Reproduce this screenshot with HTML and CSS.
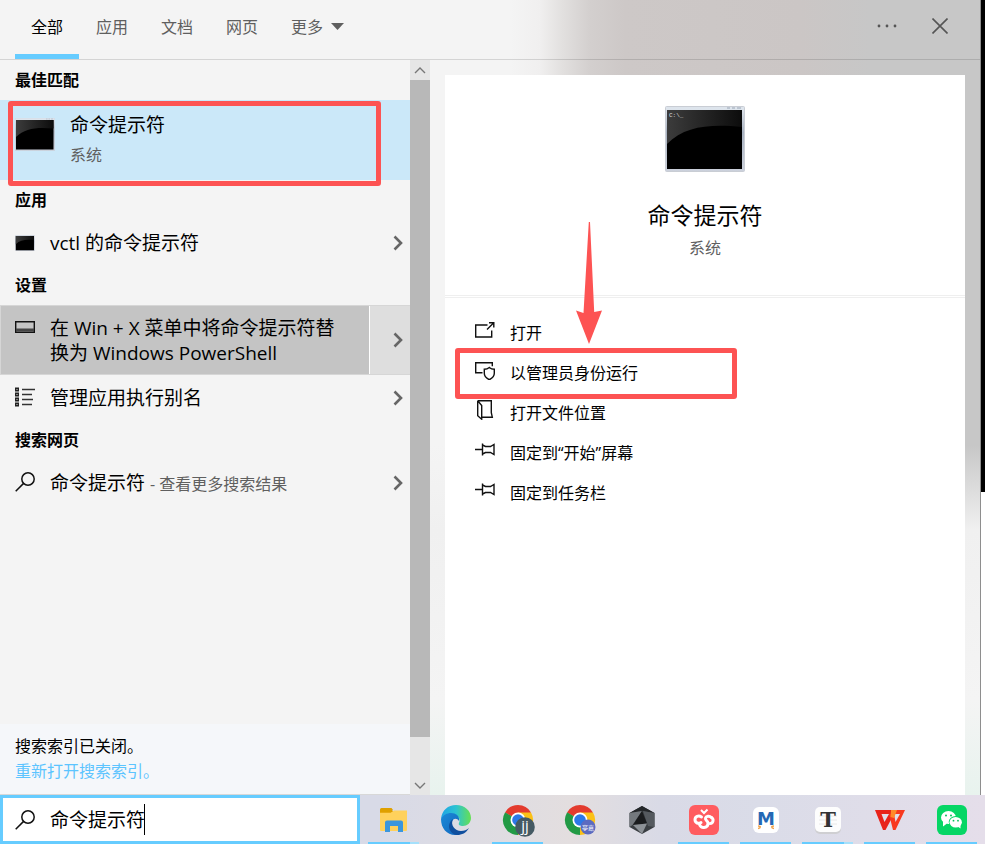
FILE: index.html
```html
<!DOCTYPE html>
<html lang="zh-CN">
<head>
  <meta charset="UTF-8" />
  <meta name="viewport" content="width=device-width, initial-scale=1.0"/>
  <title>搜索 | 命令提示符</title>
  <link rel="stylesheet" href="styles.css">
</head>
<body>
  <!-- shared icons -->
  <svg class="defs" width="0" height="0" aria-hidden="true">
    <defs>
      <linearGradient id="frame" x1="0" y1="0" x2="0" y2="1">
        <stop offset="0" stop-color="#e3e8ef"/>
        <stop offset="0.4" stop-color="#a9b3c2"/>
        <stop offset="1" stop-color="#ccd1dc"/>
      </linearGradient>
      <linearGradient id="gloss" x1="0" y1="0" x2="1" y2="0">
        <stop offset="0" stop-color="#3c3c3c"/>
        <stop offset="1" stop-color="#0c0c0c"/>
      </linearGradient>
    </defs>
    <symbol id="cmd" viewBox="0 0 80 66">
      <rect x="0.5" y="0.5" width="79" height="65" rx="1" fill="url(#frame)" stroke="#c9cdd4"/>
      <rect x="1" y="1" width="78" height="3" fill="#dde4ec"/>
      <path d="M62 2h3M67 2h3M72 2h4" stroke="#9aa5b5"/>
      <rect x="2" y="4" width="75" height="59" fill="#000"/>
      <path d="M2 4h75v17C45 18 20 20 2 38z" fill="url(#gloss)"/>
    </symbol>
    <symbol id="chevron" viewBox="0 0 10 16">
      <path d="M1.500 1.500 8 8l-6.500 6.500" fill="none" stroke="#666" stroke-width="2.600"/>
    </symbol>
    <symbol id="search" viewBox="0 0 20 20">
      <circle cx="13" cy="7" r="6.200" fill="none" stroke="#111" stroke-width="1.500"/>
      <path d="M8.600 11.400.7 19.300" stroke="#111" stroke-width="1.500"/>
    </symbol>
    <symbol id="pin" viewBox="0 0 20 20">
      <path d="M0 9.500h7.500M7.500 3.500v12M7.500 5l3 1.500h5L19 4.500v10l-3.500-2h-5l-3 1.500" fill="none" stroke="#111" stroke-width="1.400"/>
    </symbol>
  </svg>

  <main class="search-window">
    <header>
      <nav>
        <ul>
          <li><a href="#" class="active">全部</a></li>
          <li><a href="#">应用</a></li>
          <li><a href="#">文档</a></li>
          <li><a href="#">网页</a></li>
          <li><a href="#">更多 <svg width="13" height="7" viewBox="0 0 13 7"><path d="M0 0h13L6.500 7z" fill="#5f5f5f"/></svg></a></li>
        </ul>
      </nav>
      <div class="window-buttons">
        <button aria-label="选项">
          <svg width="20" height="20" viewBox="0 0 20 20" fill="#555"><circle cx="2" cy="10" r="1.400"/><circle cx="10" cy="10" r="1.400"/><circle cx="18" cy="10" r="1.400"/></svg>
        </button>
        <button aria-label="关闭">
          <svg width="16" height="16" viewBox="0 0 16 16"><path d="M.5.5l15 15M15.500.5l-15 15" stroke="#555" stroke-width="1.600"/></svg>
        </button>
      </div>
    </header>

    <div class="content">
      <section class="results">
        <div class="result-list">
          <h2>最佳匹配</h2>
          <button class="best-match">
            <svg width="40" height="33"><use href="#cmd"/></svg>
            <span class="best-text">
              <span class="name">命令提示符</span>
              <span class="kind">系统</span>
            </span>
          </button>

          <h2>应用</h2>
          <div class="row">
            <button class="result">
              <svg width="20" height="16"><use href="#cmd"/></svg>
              <span>vctl 的命令提示符</span>
            </button>
            <button class="expand" aria-label="展开"><svg width="10" height="16"><use href="#chevron"/></svg></button>
          </div>

          <h2>设置</h2>
          <div class="row hovered">
            <button class="result">
              <svg width="20" height="20" viewBox="0 0 20 20"><path d="M.7 4.700h18.600v10.600H.7z" fill="none" stroke="#111" stroke-width="1.400"/><path d="M1 13h18" stroke="#444" stroke-width="3"/></svg>
              <span>在 Win + X 菜单中将命令提示符替换为 Windows PowerShell</span>
            </button>
            <button class="expand" aria-label="展开"><svg width="10" height="16"><use href="#chevron"/></svg></button>
          </div>
          <div class="row">
            <button class="result">
              <svg width="20" height="20" viewBox="0 0 20 20"><path d="M0 .5h4v4H0zM0 5.500h4v4H0zM0 10.500h4v4H0zM0 15.500h4v4H0z" fill="#222"/><path d="M1.500 2.500h1M1.500 7.500h1M1.500 12.500h1M1.500 17.500h1" stroke="#ddd"/><path d="M7 2.500h13M7 7.500h10M7 12.500h11M7 17.500h10" stroke="#333" stroke-width="1.400"/></svg>
              <span>管理应用执行别名</span>
            </button>
            <button class="expand" aria-label="展开"><svg width="10" height="16"><use href="#chevron"/></svg></button>
          </div>

          <h2>搜索网页</h2>
          <div class="row">
            <button class="result">
              <svg width="20" height="20"><use href="#search"/></svg>
              <span>命令提示符 <small>- 查看更多搜索结果</small></span>
            </button>
            <button class="expand" aria-label="展开"><svg width="10" height="16"><use href="#chevron"/></svg></button>
          </div>
        </div>
        <div class="index-note">
          <p>搜索索引已关闭。</p>
          <a href="#">重新打开搜索索引。</a>
        </div>
      </section>

      <div class="scrollbar">
        <button aria-label="向上滚动"><svg width="12" height="7" viewBox="0 0 12 7"><path d="M1 6l5-5 5 5" fill="none" stroke="#777" stroke-width="1.400"/></svg></button>
        <div class="thumb"></div>
        <button aria-label="向下滚动"><svg width="12" height="7" viewBox="0 0 12 7"><path d="M1 1l5 5 5-5" fill="none" stroke="#777" stroke-width="1.400"/></svg></button>
      </div>

      <section class="details">
        <div class="app-card">
          <svg width="80" height="66" viewBox="0 0 80 66"><use href="#cmd"/><text x="4" y="11" class="prompt">C:\_</text></svg>
          <h1>命令提示符</h1>
          <p>系统</p>
        </div>
        <ul class="actions">
          <li><button>
            <svg width="20" height="20" viewBox="0 0 20 20" fill="none" stroke="#111" stroke-width="1.400"><path d="M12.500 5H.7v12h16v-6.500M12 9.500l6-6M14 2.700h4.800v4.800"/></svg>
            打开
          </button></li>
          <li><button class="marked">
            <svg width="20" height="20" viewBox="0 0 20 20" fill="none" stroke="#111" stroke-width="1.400"><path d="M7.500 12.700H.7v-10h16.600v3.500M14.300 7.500c1.500 1.300 3 1.800 5 1.800v4c0 3-2 5-5 6.400-3-1.400-5-3.400-5-6.400v-4c2 0 3.500-.5 5-1.800z"/></svg>
            以管理员身份运行
          </button></li>
          <li><button>
            <svg width="20" height="20" viewBox="0 0 20 20" fill="none" stroke="#111" stroke-width="1.400"><path d="M2.700.7h13.600v12l1 4.500H7M2.700.7v15l4 3.500V5.500L2.700.7"/></svg>
            打开文件位置
          </button></li>
          <li><button>
            <svg width="20" height="20"><use href="#pin"/></svg>
            固定到“开始”屏幕
          </button></li>
          <li><button>
            <svg width="20" height="20"><use href="#pin"/></svg>
            固定到任务栏
          </button></li>
        </ul>
        <svg class="arrow" width="26" height="122" viewBox="0 0 26 122"><path d="M12.800 0h1.200l4.200 90 7.800-1.500L13 122 0 88.500 7.500 91z" fill="#fd5353"/></svg>
      </section>
    </div>
  </main>

  <footer class="taskbar">
    <label class="search-box">
      <svg width="20" height="20"><use href="#search"/></svg>
      <input type="text" value="命令提示符" aria-label="搜索">
      <span class="caret"></span>
    </label>
    <div class="apps">
      <button class="open stacked" aria-label="文件资源管理器">
        <svg width="30" height="30" viewBox="0 0 30 30"><path d="M1 6h13v5H1z" fill="#e09a00"/><path d="M1 7.500h11l3-2h13V25a1 1 0 0 1-1 1H2a1 1 0 0 1-1-1z" fill="#ffd15c"/><path d="M1 4.500A1.500 1.500 0 0 1 2.500 3h10l1.500 2-2.500 2.500H1z" fill="#dfa000"/><path d="M6 27V17.500A2 2 0 0 1 8 15.500h14a2 2 0 0 1 2 2V27h-5v-6h-8v6z" fill="#3a96dd"/></svg>
      </button>
      <button aria-label="Edge">
        <svg width="30" height="30" viewBox="0 0 30 30">
          <defs>
            <linearGradient id="edgeA"><stop offset="0" stop-color="#1fa3e5"/><stop offset="0.500" stop-color="#2cc3d2"/><stop offset="1" stop-color="#66e052"/></linearGradient>
            <linearGradient id="edgeB" x1="0" y1="0" x2="1" y2="1"><stop offset="0" stop-color="#1a8ad8"/><stop offset="1" stop-color="#1467bd"/></linearGradient>
          </defs>
          <path d="M0 14C1 5 7 0 15 0c9 0 15 6 15 13 0 5-4 8-8 8-3 0-5-1-4-3 2-4-1-8-6-8-6 0-10 2-12 4z" fill="url(#edgeA)"/>
          <path d="M0 14C2 10 6 8 10 8c6 0 9 4 8 8-2-3-6-3-7 1-2 5 1 12 8 12.500C8 32 0 25 0 14z" fill="url(#edgeB)"/>
          <path d="M12 14c-3 6 2 12 8 12 3 0 6-1 8-3-3 5-7 7-12 7-8-1-11-11-4-16z" fill="#104f9e"/>
        </svg>
      </button>
      <button class="open" aria-label="Chrome 工作资料">
        <svg width="34" height="34" viewBox="0 0 34 34">
          <g id="chrome"><path d="M17 17 4 9.500a15 15 0 0 1 26 0z" fill="#e33b2e"/><path d="M17 17 4 9.500A15 15 0 0 0 17 32z" fill="#229a45"/><path d="M17 17h0V9.500h13A15 15 0 0 1 17 32z" fill="#fbc116"/><path d="M17 17 10.500 20.700 4 9.500z" fill="#229a45"/><circle cx="17" cy="17" r="7.500" fill="#fff"/><circle cx="17" cy="17" r="5.800" fill="#2c78e8"/></g>
          <circle cx="24" cy="24" r="9.800" fill="#455a64"/><text x="24" y="28" class="badge">jj</text>
        </svg>
      </button>
      <button aria-label="Chrome 亭嘉">
        <svg width="34" height="34" viewBox="0 0 34 34"><use href="#chrome"/><circle cx="25" cy="24" r="7.500" fill="#5c6bc0"/><text x="25" y="27" class="badge small">亭嘉</text></svg>
      </button>
      <button aria-label="Cursor">
        <svg width="30" height="30" viewBox="0 0 30 30"><path d="M15 1l12.500 7v14L15 29 2.500 22V8z" fill="#3a3e42"/><path d="M15 1l12.500 7L15 6 2.500 8z" fill="#24272a"/><path d="M2.500 8 15 6 5.500 20l-3 2z" fill="#74797e"/><path d="M16 6 27.500 8v14L21 21z" fill="#555a5f"/><path d="M15 6 6 20l14-1.500z" fill="#1a1c1e"/><path d="M20 18.500 6 20l9 9z" fill="#8c9196"/></svg>
      </button>
      <button class="open" aria-label="向日葵">
        <svg width="30" height="30" viewBox="0 0 30 30"><rect width="30" height="30" rx="6" fill="#ff5c5f"/><g fill="none" stroke="#fff" stroke-width="3" stroke-linecap="round"><path d="M12.500 12C9.500 10 6 11.500 6 14.800c0 3.200 3.500 4.400 6 2.700"/><path d="M22.500 12.500c-2-1.800-5.500-1.500-6 .7-.5 2.300 2.500 2.300 2.500 5 0 5-8 6-8.500.8"/><path d="M22.500 12.500c2.500 1.500 2 6-1.500 6"/></g><path d="M12 5l3 3 3.500-3.500" fill="none" stroke="#fff" stroke-width="2"/></svg>
      </button>
      <button class="open" aria-label="M">
        <svg width="28" height="28" viewBox="0 0 28 28"><rect x="1" y="1" width="26" height="26" rx="6" fill="#fff"/><text x="14" y="19" class="letter-m">M</text><path d="M6 20c3 0 3 2 0 2.500M22 20c-3 0-3 2 0 2.500" fill="none" stroke="#f0a24a" stroke-width="1.500"/></svg>
      </button>
      <button class="open stacked" aria-label="Typora">
        <svg width="28" height="28" viewBox="0 0 28 28"><rect x="1" y="2" width="26" height="26" rx="5" fill="#cfcfd2"/><rect x="1" y="1" width="26" height="25" rx="5" fill="#fdfdfd"/><path d="M5 10h18M5 14h18M5 18h18" stroke="#e8e8e8"/><text x="14" y="21" class="letter-t">T</text></svg>
      </button>
      <button class="open" aria-label="WPS">
        <svg width="30" height="22" viewBox="0 0 30 22"><path d="M0 1h19l-1 4H6.500l3 8L14 5h5l-8.500 16H8z" fill="#e8231a"/><path d="M14 5h5l1.500 8L25 5h-7l1-4h11l-9.500 20H18z" fill="#f8391f"/><path d="M16 1h6l-3 8-3.500-1z" fill="#ff8a2a"/></svg>
      </button>
      <button class="open" aria-label="微信">
        <svg width="30" height="30" viewBox="0 0 30 30"><rect width="30" height="30" rx="6" fill="#06d665"/><ellipse cx="11.500" cy="12.500" rx="7.500" ry="6.500" fill="#fff"/><path d="M6 16.500l0 5 4-3z" fill="#fff"/><ellipse cx="18.700" cy="17" rx="7" ry="6" fill="#06d665"/><ellipse cx="18.700" cy="17.300" rx="6.200" ry="5.300" fill="#fff"/><path d="M20 21l3.500 2.500V19z" fill="#fff"/><g fill="#06c35c"><circle cx="9" cy="10.500" r="1"/><circle cx="14" cy="10.500" r="1"/><circle cx="16.500" cy="15.700" r=".9"/><circle cx="21" cy="15.700" r=".9"/></g></svg>
      </button>
    </div>
  </footer>
</body>
</html>
```
FILE: styles.css
```css
:root {
  --accent: #66ccff;
  --mark: #fd5353;
  --text: #000000;
  --muted: #5f5f5f;
  --pane: #f4f4f4;
}

* {
  margin: 0;
  padding: 0;
  box-sizing: border-box;
}

body {
  font-family: 'Open Sans', 'Noto Sans CJK SC', sans-serif;
  font-size: 16px;
  line-height: 24px;
  color: var(--text);
  background: linear-gradient(#000 492px, #fff 492px);
  min-height: 100vh;
  display: flex;
  flex-direction: column;
}

button {
  font: inherit;
  color: inherit;
  background: none;
  border: none;
  text-align: left;
  cursor: pointer;
}

ul {
  list-style: none;
}

a {
  text-decoration: none;
}

svg {
  flex-shrink: 0;
}

.defs {
  position: absolute;
}

.search-window {
  flex: 1;
  display: flex;
  flex-direction: column;
  margin-right: 4px;
  border-right: 1px solid #8e8e8e;
  background:
    linear-gradient(to bottom, rgba(244, 244, 244, 0) 445px, #f0f0f0 530px, #f4f4f4 700px, #e8f3ee 795px),
    linear-gradient(to right, #f4f4f4 510px, #f0efef 540px, #e2e0df 562px, #d3cfce 590px, #cdc8c7 625px, #cbc6c5 800px, #c7c7c7 870px);
}

header {
  display: flex;
  justify-content: space-between;
  height: 60px;
  border-bottom: 1px solid rgba(0, 0, 0, 0.13);
}

nav ul {
  display: flex;
  gap: 1px;
  padding-left: 15px;
}

nav a {
  display: flex;
  align-items: center;
  gap: 8px;
  height: 59px;
  padding: 0 16px 6px;
  color: var(--muted);
}

nav a.active {
  color: var(--text);
  border-bottom: 5px solid var(--accent);
  padding-bottom: 1px;
}

.window-buttons {
  display: flex;
  align-items: center;
  padding: 0 32px 8px 0;
  gap: 35px;
}

.window-buttons button {
  display: flex;
}

.content {
  flex: 1;
  display: flex;
}

.results {
  width: 410px;
  display: flex;
  flex-direction: column;
  background: var(--pane);
}

.result-list {
  flex: 1;
}

h2 {
  font-size: 16px;
  font-weight: 700;
  line-height: 40px;
  padding-left: 15px;
}

.best-match {
  position: relative;
  display: flex;
  align-items: flex-start;
  gap: 15px;
  width: 100%;
  height: 80px;
  padding: 10px 15px;
  background: #cbe8f9;
}

.best-match svg {
  margin-top: 8px;
}

.best-text {
  display: flex;
  flex-direction: column;
  gap: 3px;
}

.name {
  font-size: 19px;
  line-height: 30px;
}

.kind {
  color: var(--muted);
}

/* red callout boxes */
.best-match::after,
.marked::after {
  content: "";
  position: absolute;
  z-index: 2;
  box-sizing: border-box;
  border: 5px solid var(--mark);
  border-radius: 3px;
}

.best-match::after {
  top: 1px;
  left: 8px;
  width: 373px;
  height: 85px;
}

.row {
  display: flex;
}

.result {
  flex: 1;
  display: flex;
  align-items: flex-start;
  gap: 15px;
  padding: 11px 20px 9px 15px;
  font-size: 19px;
  line-height: 25px;
}

.result svg {
  margin-top: 1px;
}

.result svg[height="16"] {
  margin-top: 4px;
}

.result small {
  font-size: 16px;
  color: var(--muted);
}

.expand {
  display: flex;
  align-items: center;
  justify-content: center;
  width: 40px;
  padding-left: 16px;
}

.row.hovered {
  border: 1px solid #d6d6d6;
  border-right: none;
  background: #dedede;
}

.hovered .result {
  padding: 10px 20px 8px 14px;
  background: #c4c4c4;
  border-right: 1px solid #fff;
}

.index-note {
  padding: 10px 15px;
  line-height: 25px;
  background: #f5f7fa;
  border-bottom: 1px solid #d8d8d8;
}

.index-note a {
  display: block;
  color: #5cc4ff;
}

.scrollbar {
  width: 20px;
  display: flex;
  flex-direction: column;
  background: #e6e6e6;
}

.scrollbar button {
  display: flex;
  align-items: center;
  justify-content: center;
  height: 20px;
}

.thumb {
  flex: 1;
  margin-bottom: 38px;
  background: #b8b8b8;
}

.details {
  position: relative;
  flex: 1;
  margin: 15px 15px 0;
  background: #fff;
}

.app-card {
  display: flex;
  flex-direction: column;
  align-items: center;
  padding: 31px 0 35px;
  border-bottom: 3px double #efefef;
}

h1 {
  font-size: 23px;
  font-weight: 400;
  line-height: 34px;
  margin: 26px 0 4px;
}

.app-card p {
  color: var(--muted);
}

.prompt {
  font: 6px 'Liberation Mono', monospace;
  fill: #ddd;
}

.actions {
  padding: 15px 30px;
}

.actions button {
  position: relative;
  display: flex;
  align-items: center;
  gap: 15px;
  width: 100%;
  height: 40px;
}

.actions svg {
  margin-bottom: 6px;
}

.marked::after {
  top: -5px;
  left: -20px;
  width: 282px;
  height: 51px;
}

.arrow {
  position: absolute;
  top: 147px;
  left: 131px;
}

.taskbar {
  display: flex;
  height: 49px;
  background: linear-gradient(to right, #d8dae7 380px, #e3dedf 570px, #d9dae6 660px, #dadce8 760px, #e5deea 985px);
}

.search-box {
  position: relative;
  display: flex;
  align-items: center;
  gap: 15px;
  width: 360px;
  padding: 0 12px;
  background: #fff;
  border: 3px solid var(--accent);
}

.search-box input {
  flex: 1;
  min-width: 0;
  border: none;
  outline: none;
  font: inherit;
  font-size: 19px;
  line-height: 30px;
}

.caret {
  position: absolute;
  top: 6px;
  left: 141px;
  width: 1px;
  height: 31px;
  background: #000;
}

.apps {
  flex: 1;
  display: flex;
  justify-content: space-between;
  padding: 0 8px 0 8px;
}

.apps button {
  position: relative;
  display: flex;
  align-items: center;
  justify-content: center;
  width: 51px;
}

.apps .open {
  border-bottom: 2px solid var(--accent);
  padding-top: 2px;
}

.apps .stacked {
  border-image: linear-gradient(to right, var(--accent) 80%, #a5e0fb 80%) 2;
}

.badge {
  font: 15px 'Open Sans', sans-serif;
  fill: #fff;
  text-anchor: middle;
}

.badge.small {
  font: 6px 'Noto Sans CJK SC', sans-serif;
}

.letter-m {
  font: 700 18px 'DejaVu Sans', sans-serif;
  fill: #2468b5;
  text-anchor: middle;
}

.letter-t {
  font: 700 21px 'DejaVu Serif', serif;
  fill: #333;
  text-anchor: middle;
}
```
